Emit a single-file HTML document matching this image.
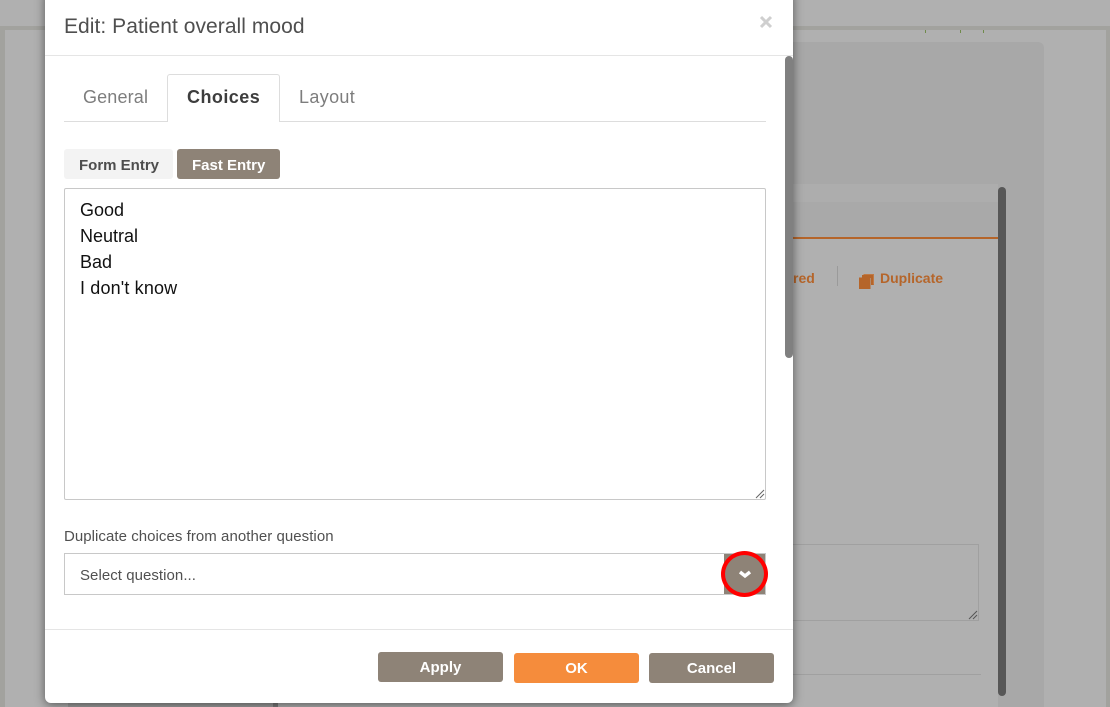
<!DOCTYPE html>
<html><head><meta charset="utf-8"><style>
*{box-sizing:border-box}
html,body{margin:0;padding:0}
body{width:1110px;height:707px;overflow:hidden;position:relative;background:#b0b0b0;font-family:"Liberation Sans",sans-serif}
.a{position:absolute}
.t{position:absolute;white-space:nowrap;line-height:1}
.btn{position:absolute;border-radius:3px;color:#fff;font-weight:bold;font-size:15px;text-align:center;background:#8e8377}
</style></head><body>
<!-- background -->
<div class="a" style="left:0;top:26px;width:1110px;height:4px;background:#a2a29e"></div>
<div class="a" style="left:0;top:26px;width:5px;height:681px;background:#a2a29e"></div>
<div class="a" style="left:1106px;top:26px;width:4px;height:681px;background:#a2a29e"></div>
<div class="a" style="left:925px;top:30px;width:1px;height:3px;background:#6f8a4a"></div>
<div class="a" style="left:960px;top:30px;width:1px;height:3px;background:#6f8a4a"></div>
<div class="a" style="left:983px;top:30px;width:1px;height:3px;background:#6f8a4a"></div>
<div class="a" style="left:300px;top:42px;width:744px;height:665px;background:#a8a8a8;border-radius:6px 6px 0 0"></div>
<div class="a" style="left:300px;top:184px;width:698px;height:523px;background:#b0b0b0"></div>
<div class="a" style="left:300px;top:184px;width:698px;height:18px;background:#adadad"></div>
<div class="a" style="left:300px;top:202px;width:698px;height:35px;background:#a9a9a9"></div>
<div class="a" style="left:300px;top:237px;width:698px;height:2px;background:#b5652a"></div>
<div class="a" style="left:998px;top:187px;width:8px;height:509px;background:#575757;border-radius:4px"></div>
<div class="t" style="left:793px;top:271px;font-size:14px;font-weight:bold;color:#b5652a">red</div>
<div class="a" style="left:837px;top:266px;width:1px;height:20px;background:#9a9a9a"></div>
<svg class="a" style="left:859px;top:273px" width="16" height="16" viewBox="0 0 16 16"><path d="M3 2H15V12H12V5H3Z" fill="#b5652a"/><path d="M4.5 1.5H14.5V11.5" fill="none" stroke="#c07a45" stroke-width="1"/><rect x="0" y="4.5" width="11.5" height="11.5" fill="#b5652a"/></svg>
<div class="t" style="left:880px;top:271px;font-size:14px;font-weight:bold;color:#b5652a">Duplicate</div>
<div class="a" style="left:700px;top:544px;width:279px;height:77px;border:1px solid #a0a0a0"></div>
<svg class="a" style="left:968px;top:610px" width="10" height="10"><path d="M1 9L9 1M5 9L9 5" stroke="#555" stroke-width="1"/></svg>
<div class="a" style="left:700px;top:674px;width:281px;height:1px;background:#a0a0a0"></div>
<div class="a" style="left:68px;top:703px;width:205px;height:4px;background:#9e9e9e"></div>
<div class="a" style="left:273px;top:703px;width:5px;height:4px;background:#7c7c7c"></div>
<!-- modal -->
<div class="a" style="left:45px;top:-10px;width:748px;height:713px;background:#fff;border-radius:6px;box-shadow:0 2px 10px rgba(0,0,0,.5)"></div>
<div class="t" style="left:64px;top:16px;font-size:21px;color:#4f4f4f;letter-spacing:.05px">Edit: Patient overall mood</div>
<svg class="a" style="left:759px;top:15px" width="14" height="14"><path d="M2 2L12 12M12 2L2 12" stroke="#cfcfcf" stroke-width="3"/></svg>
<div class="a" style="left:45px;top:55px;width:748px;height:1px;background:#e5e5e5"></div>
<div class="a" style="left:785px;top:56px;width:8px;height:302px;background:#808080;border-radius:4px"></div>
<!-- tabs -->
<div class="a" style="left:64px;top:121px;width:702px;height:1px;background:#ddd"></div>
<div class="a" style="left:167px;top:74px;width:113px;height:48px;background:#fff;border:1px solid #ddd;border-bottom:0;border-radius:3px 3px 0 0"></div>
<div class="t" style="left:83px;top:88px;font-size:18px;color:#7d7d7d;letter-spacing:.15px">General</div>
<div class="t" style="left:187px;top:88px;font-size:18px;font-weight:bold;color:#3d3d3d;letter-spacing:.45px">Choices</div>
<div class="t" style="left:299px;top:88px;font-size:18px;color:#7d7d7d;letter-spacing:.35px">Layout</div>
<!-- toggle -->
<div class="a" style="left:64px;top:149px;width:109px;height:30px;background:#f3f3f3;border-radius:3px"></div>
<div class="t" style="left:79px;top:158px;font-size:15px;font-weight:bold;color:#4d4d4d">Form Entry</div>
<div class="a" style="left:177px;top:149px;width:103px;height:30px;background:#8e8377;border-radius:3px"></div>
<div class="t" style="left:192px;top:158px;font-size:15px;font-weight:bold;color:#fff">Fast Entry</div>
<!-- textarea -->
<div class="a" style="left:64px;top:188px;width:702px;height:312px;border:1px solid #c8c8c8;border-radius:2px"></div>
<div class="t" style="left:80px;top:201px;font-size:18px;color:#111">Good</div>
<div class="t" style="left:80px;top:227px;font-size:18px;color:#111">Neutral</div>
<div class="t" style="left:80px;top:253px;font-size:18px;color:#111">Bad</div>
<div class="t" style="left:80px;top:279px;font-size:18px;color:#111;letter-spacing:.15px">I don't know</div>
<svg class="a" style="left:755px;top:489px" width="10" height="10"><path d="M1 9L9 1M5 9L9 5" stroke="#666" stroke-width="1"/></svg>
<!-- dup -->
<div class="t" style="left:64px;top:529px;font-size:15px;color:#505050;letter-spacing:.05px">Duplicate choices from another question</div>
<div class="a" style="left:64px;top:553px;width:702px;height:42px;border:1px solid #c8c8c8"></div>
<div class="t" style="left:80px;top:568px;font-size:15px;color:#505050;letter-spacing:.05px">Select question...</div>
<div class="a" style="left:724px;top:554px;width:41px;height:40px;background:#8e8377"></div>
<div class="a" style="left:721px;top:551px;width:47px;height:46px;border:4px solid #f00;border-radius:50%"></div>
<svg class="a" style="left:738px;top:569px" width="14" height="10"><path d="M2 3L7 7L12 3" fill="none" stroke="#fff" stroke-width="3.4"/></svg>
<!-- footer -->
<div class="a" style="left:45px;top:629px;width:748px;height:1px;background:#e5e5e5"></div>
<div class="btn" style="left:378px;top:652px;width:125px;height:30px;line-height:31px">Apply</div>
<div class="btn" style="left:514px;top:653px;width:125px;height:30px;line-height:31px;background:#f58c3c">OK</div>
<div class="btn" style="left:649px;top:653px;width:125px;height:30px;line-height:31px">Cancel</div>
</body></html>
